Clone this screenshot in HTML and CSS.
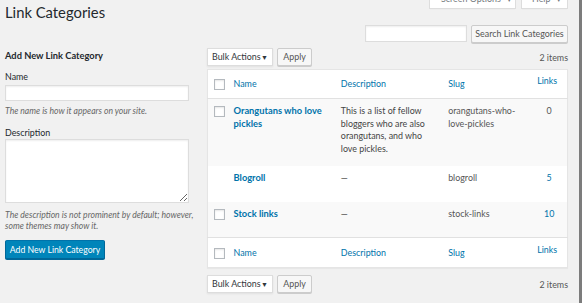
FILE: index.html
```html
<!DOCTYPE html>
<html>
<head>
<meta charset="utf-8">
<link rel="stylesheet" href="styles.css">
</head>
<body>
<div class="screen">
  <div class="page">
    <div class="head">
      <h1 class="title">Link Categories</h1>
      <div class="meta">
        <div class="meta-btn meta-screen">Screen Options <span class="caret">▼</span></div>
        <div class="meta-btn meta-help">Help <span class="caret">▼</span></div>
      </div>
    </div>
    <div class="search">
      <input class="search-input" type="text">
      <div class="btn search-btn">Search Link Categories</div>
    </div>
    <div class="cols">
      <div class="col-left">
        <h2 class="form-title">Add New Link Category</h2>
        <div class="label label-name">Name</div>
        <input class="text-input" type="text">
        <p class="help help-name">The name is how it appears on your site.</p>
        <div class="label label-desc">Description</div>
        <textarea class="textarea"></textarea>
        <p class="help help-desc">The description is not prominent by default; however, some themes may show it.</p>
        <div class="btn-primary">Add New Link Category</div>
      </div>
      <div class="col-right">
        <div class="tablenav">
          <div class="select">Bulk Actions <span class="sel-caret">▼</span></div>
          <div class="btn apply-btn">Apply</div>
          <div class="count">2 items</div>
        </div>
        <table class="list">
          <colgroup>
            <col class="c-cb"><col class="c-name"><col class="c-desc"><col class="c-slug"><col class="c-num">
          </colgroup>
          <thead>
            <tr class="hrow">
              <th class="cb"><span class="check"></span></th>
              <th class="th">Name</th>
              <th class="th">Description</th>
              <th class="th">Slug</th>
              <th class="th num">Links</th>
            </tr>
          </thead>
          <tbody>
            <tr class="row alt r-tall">
              <td class="cb"><span class="check"></span></td>
              <td class="name"><a class="row-title">Orangutans who love pickles</a></td>
              <td class="desc">This is a list of fellow bloggers who are also orangutans, and who love pickles.</td>
              <td class="slug">orangutans-who-love-pickles</td>
              <td class="num-cell plain">0</td>
            </tr>
            <tr class="row r-short">
              <td class="cb"></td>
              <td class="name"><a class="row-title">Blogroll</a></td>
              <td class="desc">—</td>
              <td class="slug">blogroll</td>
              <td class="num-cell link">5</td>
            </tr>
            <tr class="row alt r-short">
              <td class="cb"><span class="check"></span></td>
              <td class="name"><a class="row-title">Stock links</a></td>
              <td class="desc">—</td>
              <td class="slug">stock-links</td>
              <td class="num-cell link">10</td>
            </tr>
          </tbody>
          <tfoot>
            <tr class="frow">
              <th class="cb"><span class="check"></span></th>
              <th class="th">Name</th>
              <th class="th">Description</th>
              <th class="th">Slug</th>
              <th class="th num">Links</th>
            </tr>
          </tfoot>
        </table>
        <div class="tablenav tablenav-bottom">
          <div class="select">Bulk Actions <span class="sel-caret">▼</span></div>
          <div class="btn apply-btn">Apply</div>
          <div class="count">2 items</div>
        </div>
      </div>
    </div>
  </div>
  <div class="edge"></div>
</div>
</body>
</html>
```
FILE: styles.css
```css
* { box-sizing: border-box; }
html, body { margin: 0; padding: 0; }
body {
  background: #f1f1f1;
  font-family: Lato, "Open Sans", sans-serif;
  font-size: 8.9px;
  color: #444;
}
.screen { display: flex; width: 582px; height: 303px; overflow: hidden; }
.page { width: 579px; padding: 0 11px 0 5px; }
.edge { width: 3px; background: #7c7c7c; }

.head { display: flex; align-items: flex-start; height: 25px; }
.title {
  margin: 2px 0 0 0;
  font-size: 14.8px;
  line-height: 21px;
  font-weight: 400;
  color: #23282d;
}
.meta { margin-left: auto; display: flex; gap: 5px; margin-top: -11px; }
.meta-btn {
  height: 20px;
  background: #fff;
  border: 1px solid #ddd;
  border-top: none;
  box-shadow: 0 1px 1px -1px rgba(0,0,0,.1);
  color: #72777c;
  line-height: 20px;
  white-space: nowrap;
}
.meta-screen { width: 87px; padding-left: 11px; }
.meta-help { width: 47px; padding-left: 10px; }
.caret { font-size: 6px; margin-left: 3px; }

.search { display: flex; justify-content: flex-end; gap: 4px; height: 18px; }
.search-input {
  width: 102px; height: 17px; margin: 0;
  border: 1px solid #ddd; background: #fff;
  box-shadow: inset 0 1px 2px rgba(0,0,0,.07);
}
.btn {
  height: 18px;
  background: #f7f7f7;
  border: 1px solid #ccc;
  border-radius: 2px;
  box-shadow: 0 1px 0 #ccc;
  color: #555;
  line-height: 16px;
  text-align: center;
  white-space: nowrap;
}
.search-btn { width: 97px; }

.cols { display: flex; gap: 8px; margin-top: 5px; }
.col-left { width: 194px; flex: none; }
.col-right { width: 361px; flex: none; }

.form-title {
  margin: 0;
  font-size: 9.3px;
  line-height: 16px;
  font-weight: 700;
  color: #23282d;
}
.label { line-height: 12px; color: #23282d; }
.label-name { margin-top: 7px; }
.text-input {
  display: block; width: 184px; height: 16px; margin: 2px 0 0 0;
  border: 1px solid #ddd; background: #fff;
  box-shadow: inset 0 1px 2px rgba(0,0,0,.07);
}
.help { margin: 0; font-style: italic; color: #666; line-height: 11.5px; font-size: 8.6px; }
.help-name { margin-top: 5px; }
.label-desc { margin-top: 9px; }
.textarea {
  display: block; width: 184px; height: 64px; margin: 0;
  border: 1px solid #ddd; background: #fff;
  box-shadow: inset 0 1px 2px rgba(0,0,0,.07);
  resize: both;
}
.help-desc { margin-top: 7px; width: 199px; }
.btn-primary {
  margin-top: 7px;
  width: 100px; height: 19px;
  background: #0085ba;
  border: 1px solid #0073aa;
  border-color: #0073aa #006799 #006799;
  border-radius: 2px;
  box-shadow: 0 1px 0 #006799;
  color: #fff;
  line-height: 17px;
  font-size: 8.7px;
  text-align: center;
  white-space: nowrap;
}

.tablenav { display: flex; align-items: center; height: 18px; }
.select {
  width: 66px; height: 18px;
  background: #fff;
  border: 1px solid #ddd;
  box-shadow: 0 1px 2px rgba(0,0,0,.07);
  line-height: 16px;
  padding-left: 4px;
  color: #32373c;
  position: relative;
  white-space: nowrap;
}
.sel-caret { font-size: 7px; position: absolute; right: 4px; top: 0; color: #32373c; }
.apply-btn { width: 35px; margin-left: 4px; }
.count { margin-left: auto; color: #555; }

.list {
  margin-top: 3px;
  width: 361px;
  border-collapse: collapse;
  table-layout: fixed;
  background: #fff;
  border: 1px solid #e5e5e5;
  box-shadow: 0 1px 1px rgba(0,0,0,.04);
}
.c-cb { width: 18px; }
.c-name { width: 107px; }
.c-desc { width: 107px; }
.c-slug { width: 87px; }
.c-num { width: 40px; }

.hrow { height: 29px; border-bottom: 1px solid #e1e1e1; }
.frow { height: 30px; border-top: 1px solid #e1e1e1; }
th, td { padding: 0; text-align: left; font-weight: 400; }
.th { color: #0073aa; padding-left: 8px; vertical-align: middle; line-height: 12.5px; }
.th.num { text-align: center; padding-left: 0; vertical-align: top; padding-top: 4.5px; }
.frow .th { padding-top: 1px; }
.frow .th.num { padding-top: 5.5px; }
.cb { padding-left: 6px; vertical-align: top; }
.hrow .cb { padding-top: 9px; }
.frow .cb { padding-top: 10px; }
.check {
  display: block; width: 11px; height: 11px;
  background: #fff;
  border: 1px solid #b4b9be;
  box-shadow: inset 0 1px 2px rgba(0,0,0,.1);
}

.row td { vertical-align: top; padding-top: 6px; line-height: 12.5px; }
.row td.cb { padding-top: 7px; }
.row.alt { background: #f9f9f9; }
.r-tall { height: 67px; }
.r-short { height: 36px; }
.name, .desc, .slug { padding-left: 8px; padding-right: 6px; }
.row-title { color: #0073aa; font-weight: 700; font-size: 9.3px; }
.desc { color: #444; }
.slug { color: #555; }
.num-cell { text-align: center; padding-left: 4px; }
.num-cell.plain { color: #555; }
.num-cell.link { color: #0073aa; }

.tablenav-bottom { margin-top: 7px; }
```
